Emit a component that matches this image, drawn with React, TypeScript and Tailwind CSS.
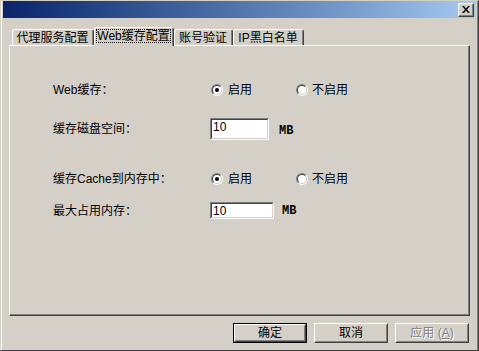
const font = "font-['Liberation_Sans','Noto_Sans_CJK_SC',sans-serif]";

const Radio = ({ checked }: { checked?: boolean }) => (
  <span className="flex h-[12px] w-[12px] shrink-0 items-center justify-center rounded-full border border-t-[#808080] border-l-[#808080] border-r-white border-b-white">
    <span className="flex h-[10px] w-[10px] items-center justify-center rounded-full border border-t-[#404040] border-l-[#404040] border-r-[#d4d0c8] border-b-[#d4d0c8] bg-white">
      {checked && <span className="h-[4px] w-[4px] rounded-full bg-black" />}
    </span>
  </span>
);

const RadioGroup = () => (
  <div className="ml-[1px] flex items-center">
    <div className="flex w-[85px] items-center gap-[5px]">
      <Radio checked />
      <span>启用</span>
    </div>
    <div className="flex items-center gap-[4px]">
      <Radio />
      <span>不启用</span>
    </div>
  </div>
);

const SunkenInput = ({ w, h, value }: { w: string; h: string; value: string }) => (
  <div className={`${w} ${h} border border-t-[#808080] border-l-[#808080] border-r-white border-b-white`}>
    <div className="h-full w-full border border-t-[#404040] border-l-[#404040] border-r-[#d4d0c8] border-b-[#d4d0c8] bg-white pl-[1px] text-[12px] leading-[14px]">
      {value}
    </div>
  </div>
);

const Button = ({
  children,
  primary,
  disabled
}: {
  children: React.ReactNode;
  primary?: boolean;
  disabled?: boolean;
}) => {
  const inner = (
    <div className="h-full w-full border border-t-white border-l-white border-r-[#404040] border-b-[#404040]">
      <div
        className={`flex h-full w-full items-center justify-center border border-t-[#d4d0c8] border-l-[#d4d0c8] border-r-[#808080] border-b-[#808080] text-[12px] ${
          disabled ? "text-[#808080] [text-shadow:1px_1px_0_#ffffff]" : "text-black"
        }`}
      >
        {children}
      </div>
    </div>
  );
  if (primary) {
    return <div className="h-[20px] w-[74px] border border-black">{inner}</div>;
  }
  return <div className="h-[20px] w-[74px]">{inner}</div>;
};

const Tab = ({ label, w }: { label: React.ReactNode; w: string }) => (
  <div className={`${w} h-[16px] rounded-t-[3px] border-t border-l border-r border-t-white border-l-white border-r-[#404040]`}>
    <div className="flex h-full items-center justify-center border-r border-r-[#808080] text-[12px] leading-none">
      {label}
    </div>
  </div>
);

export default function App() {
  return (
    <div className={`${font} h-[351px] w-[479px] overflow-hidden border-t border-l border-r border-b border-t-[#d4d0c8] border-l-[#d4d0c8] border-r-[#404040] border-b-[#404040] bg-[#d4d0c8] text-black`}>
      <div className="h-full border-l border-r border-l-white border-r-[#808080] pl-[1px] pr-[1px]">
        {/* title bar */}
        <div className="flex h-[17px] items-center justify-end bg-gradient-to-r from-[#0a246a] to-[#a6caf0] pr-[2px]">
          <div className="h-[14px] w-[16px] border border-t-white border-l-white border-r-[#404040] border-b-[#404040] bg-[#d4d0c8]">
            <div className="flex h-full w-full items-center justify-center border-r border-b border-r-[#808080] border-b-[#808080]">
              <svg width="8" height="7" viewBox="0 0 8 7">
                <path d="M0 0h2l2 2.5L6 0h2L5 3.5 8 7H6L4 4.5 2 7H0l3-3.5z" fill="#000" />
              </svg>
            </div>
          </div>
        </div>

        <div className="ml-[6px] w-[461px]">
          {/* tabs */}
          <div className="mt-[9px] flex h-[18px] items-end pl-[3px]">
            <Tab w="w-[82px]" label="代理服务配置" />
            <div className="relative z-10 mb-[-1px] h-[19px] w-[80px] rounded-t-[3px] border-t border-l border-r border-t-white border-l-white border-r-[#404040] bg-[#d4d0c8]">
              <div className="h-full border-r border-r-[#808080] px-[1px] pt-[1px] pb-[3px]">
                <div className="flex h-full items-center justify-center border border-dotted border-black text-[12px] leading-none">
                  Web缓存配置
                </div>
              </div>
            </div>
            <Tab w="w-[59px]" label="账号验证" />
            <Tab w="w-[71px]" label="IP黑白名单" />
          </div>

          {/* panel */}
          <div className="h-[271px] border border-t-white border-l-white border-r-[#404040] border-b-[#404040]">
            <div className="h-full border-r border-b border-r-[#808080] border-b-[#808080] pl-[43px] pt-[34px] text-[12px]">
              <div className="flex h-[20px] items-center">
                <div className="w-[157px]">Web缓存：</div>
                <RadioGroup />
              </div>
              <div className="mt-[18px] flex h-[22px] items-center">
                <div className="w-[157px]">缓存磁盘空间：</div>
                <SunkenInput w="w-[59px]" h="h-[22px]" value="10" />
                <span className="ml-[10px] mt-[3px] font-['Liberation_Mono',monospace] text-[12px] font-bold">MB</span>
              </div>
              <div className="mt-[29px] flex h-[20px] items-center">
                <div className="w-[157px]">缓存Cache到内存中：</div>
                <RadioGroup />
              </div>
              <div className="mt-[13px] flex h-[17px] items-center">
                <div className="w-[157px]">最大占用内存：</div>
                <SunkenInput w="w-[64px]" h="h-[17px]" value="10" />
                <span className="ml-[8px] mt-[1px] font-['Liberation_Mono',monospace] text-[12px] font-bold">MB</span>
              </div>
            </div>
          </div>

          {/* buttons */}
          <div className="mt-[7px] flex justify-end gap-[7px] pr-[1px]">
            <Button primary>确定</Button>
            <Button>取消</Button>
            <Button disabled>
              应用 (<span className="underline">A</span>)
            </Button>
          </div>
        </div>
      </div>
    </div>
  );
}
